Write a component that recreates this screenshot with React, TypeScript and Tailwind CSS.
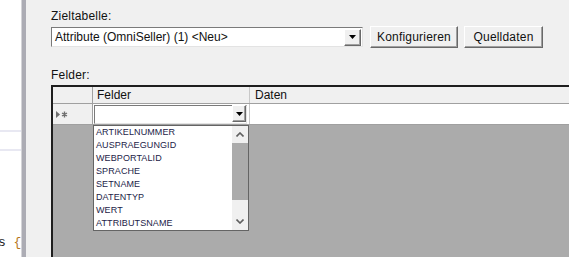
const ui = { fontFamily: '"Liberation Sans", Arial, sans-serif' };

const items = [
  'ARTIKELNUMMER',
  'AUSPRAEGUNGID',
  'WEBPORTALID',
  'SPRACHE',
  'SETNAME',
  'DATENTYP',
  'WERT',
  'ATTRIBUTSNAME',
];

function DropArrow() {
  return (
    <svg width="7" height="4" viewBox="0 0 7 4">
      <path d="M0 0h7L3.5 4z" fill="#000" />
    </svg>
  );
}

function DropButton({ className }: { className: string }) {
  return (
    <div
      className={`flex items-center justify-center bg-[#f0f0f0] border border-t-white border-l-white border-r-[#696969] border-b-[#696969] shadow-[inset_-1px_-1px_0_#a0a0a0] ${className}`}
    >
      <DropArrow />
    </div>
  );
}

function Button({ label, w }: { label: string; w: string }) {
  return (
    <div
      className={`${w} h-[22px] flex items-center justify-center bg-[#f0f0f0] border border-t-white border-l-white border-r-[#696969] border-b-[#696969] shadow-[inset_-1px_-1px_0_#a0a0a0] text-[12px] text-[#111] tracking-[0.2px]`}
    >
      {label}
    </div>
  );
}

function Chevron({ up }: { up?: boolean }) {
  return (
    <svg width="8" height="5" viewBox="0 0 8 5">
      <path
        d={up ? 'M0.5 4.5L4 1l3.5 3.5' : 'M0.5 0.5L4 4l3.5-3.5'}
        fill="none"
        stroke="#606060"
        strokeWidth="1.6"
      />
    </svg>
  );
}

function RowMarker() {
  return (
    <svg width="12" height="7" viewBox="0 0 12 7">
      <path d="M0 0l4 3.5L0 7z" fill="#6e6e6e" />
      <path
        d="M8.5 0.5v6M6 2l5 3M11 2l-5 3"
        stroke="#6e6e6e"
        strokeWidth="1.4"
      />
    </svg>
  );
}

export default function App() {
  return (
    <div className="w-[569px] h-[257px] flex overflow-hidden" style={ui}>
      {/* editor behind the dialog */}
      <div className="w-[21px] bg-white flex flex-col overflow-hidden">
        <div className="mt-[130px] h-[2px] bg-[#e8e8f2]" />
        <div className="mt-[17px] h-[2px] bg-[#e8e8f2]" />
        <div
          className="mt-[84px] ml-[-2px] whitespace-nowrap text-[13px] leading-[16px]"
          style={{ fontFamily: '"Liberation Mono", monospace' }}
        >
          <span className="text-[#1f1f1f]">s </span>
          <span className="text-[#b5761a]">{'{'}</span>
        </div>
      </div>
      <div className="w-px bg-[#d4d4d8]" />
      <div className="w-[4px] bg-[#acacb4]" />

      {/* dialog */}
      <div className="flex-1 bg-[#f0f0f0] pl-[25px] flex flex-col">
        <div className="mt-[9px] h-[14px] leading-[14px] text-[12px] text-[#111] tracking-[0.2px]">
          Zieltabelle:
        </div>
        <div className="mt-[3px] flex items-start gap-[6px]">
          <div className="mt-px w-[312px] h-[20px] mr-px flex items-center bg-white border border-t-[#7a7a7a] border-l-[#7a7a7a] border-r-[#e3e3e3] border-b-[#e3e3e3] pl-[3px] pr-px">
            <span className="flex-1 text-[12px] text-[#111]">
              Attribute (OmniSeller) (1) &lt;Neu&gt;
            </span>
            <DropButton className="w-[17px] h-[17px]" />
          </div>
          <Button label="Konfigurieren" w="w-[88px]" />
          <Button label="Quelldaten" w="w-[79px]" />
        </div>
        <div className="mt-[20px] h-[14px] leading-[14px] text-[12px] text-[#111] tracking-[0.2px]">
          Felder:
        </div>

        {/* grid */}
        <div className="mt-[3px] flex-1 relative border-l-2 border-t-2 border-[#1e1e1e] bg-[#ababab] flex flex-col">
          <div className="h-[17px] flex bg-[#f0f0f0] border-b border-[#a0a0a0] text-[12px] text-[#111]">
            <div className="w-[40px] border-r border-[#a0a0a0]" />
            <div className="w-[157px] border-r border-[#c8c8c8] pl-[4px] leading-[16px]">
              Felder
            </div>
            <div className="flex-1 pl-[5px] leading-[16px]">Daten</div>
          </div>
          <div className="h-[21px] flex border-b border-[#a0a0a0]">
            <div className="w-[40px] bg-[#f0f0f0] border-r border-[#a0a0a0] flex items-center pl-[3px]">
              <RowMarker />
            </div>
            <div className="w-[157px] bg-white border-r border-[#c8c8c8] pt-px pl-px pr-[2px]">
              <div className="h-[19px] flex items-start justify-end border border-t-[#7a7a7a] border-l-[#7a7a7a] border-r-[#e3e3e3] border-b-[#e3e3e3]">
                <DropButton className="w-[14px] h-[17px] -mt-px" />
              </div>
            </div>
            <div className="flex-1 bg-white" />
          </div>

          {/* open dropdown list */}
          <div className="absolute left-[40px] top-[38px] w-[156px] h-[106px] bg-white border border-[#646464] flex">
            <div className="flex-1 flex flex-col pl-[2px]">
              {items.map((t) => (
                <div
                  key={t}
                  className="h-[13px] leading-[13px] text-[9px] text-[#1c1c48] tracking-[0.1px]"
                >
                  {t}
                </div>
              ))}
            </div>
            <div className="w-[16px] bg-[#f0f0f0] flex flex-col">
              <div className="h-[17px] flex items-center justify-center">
                <Chevron up />
              </div>
              <div className="h-[57px] bg-[#ababab]" />
              <div className="flex-1" />
              <div className="h-[17px] flex items-center justify-center">
                <Chevron />
              </div>
            </div>
          </div>
        </div>
      </div>
    </div>
  );
}
